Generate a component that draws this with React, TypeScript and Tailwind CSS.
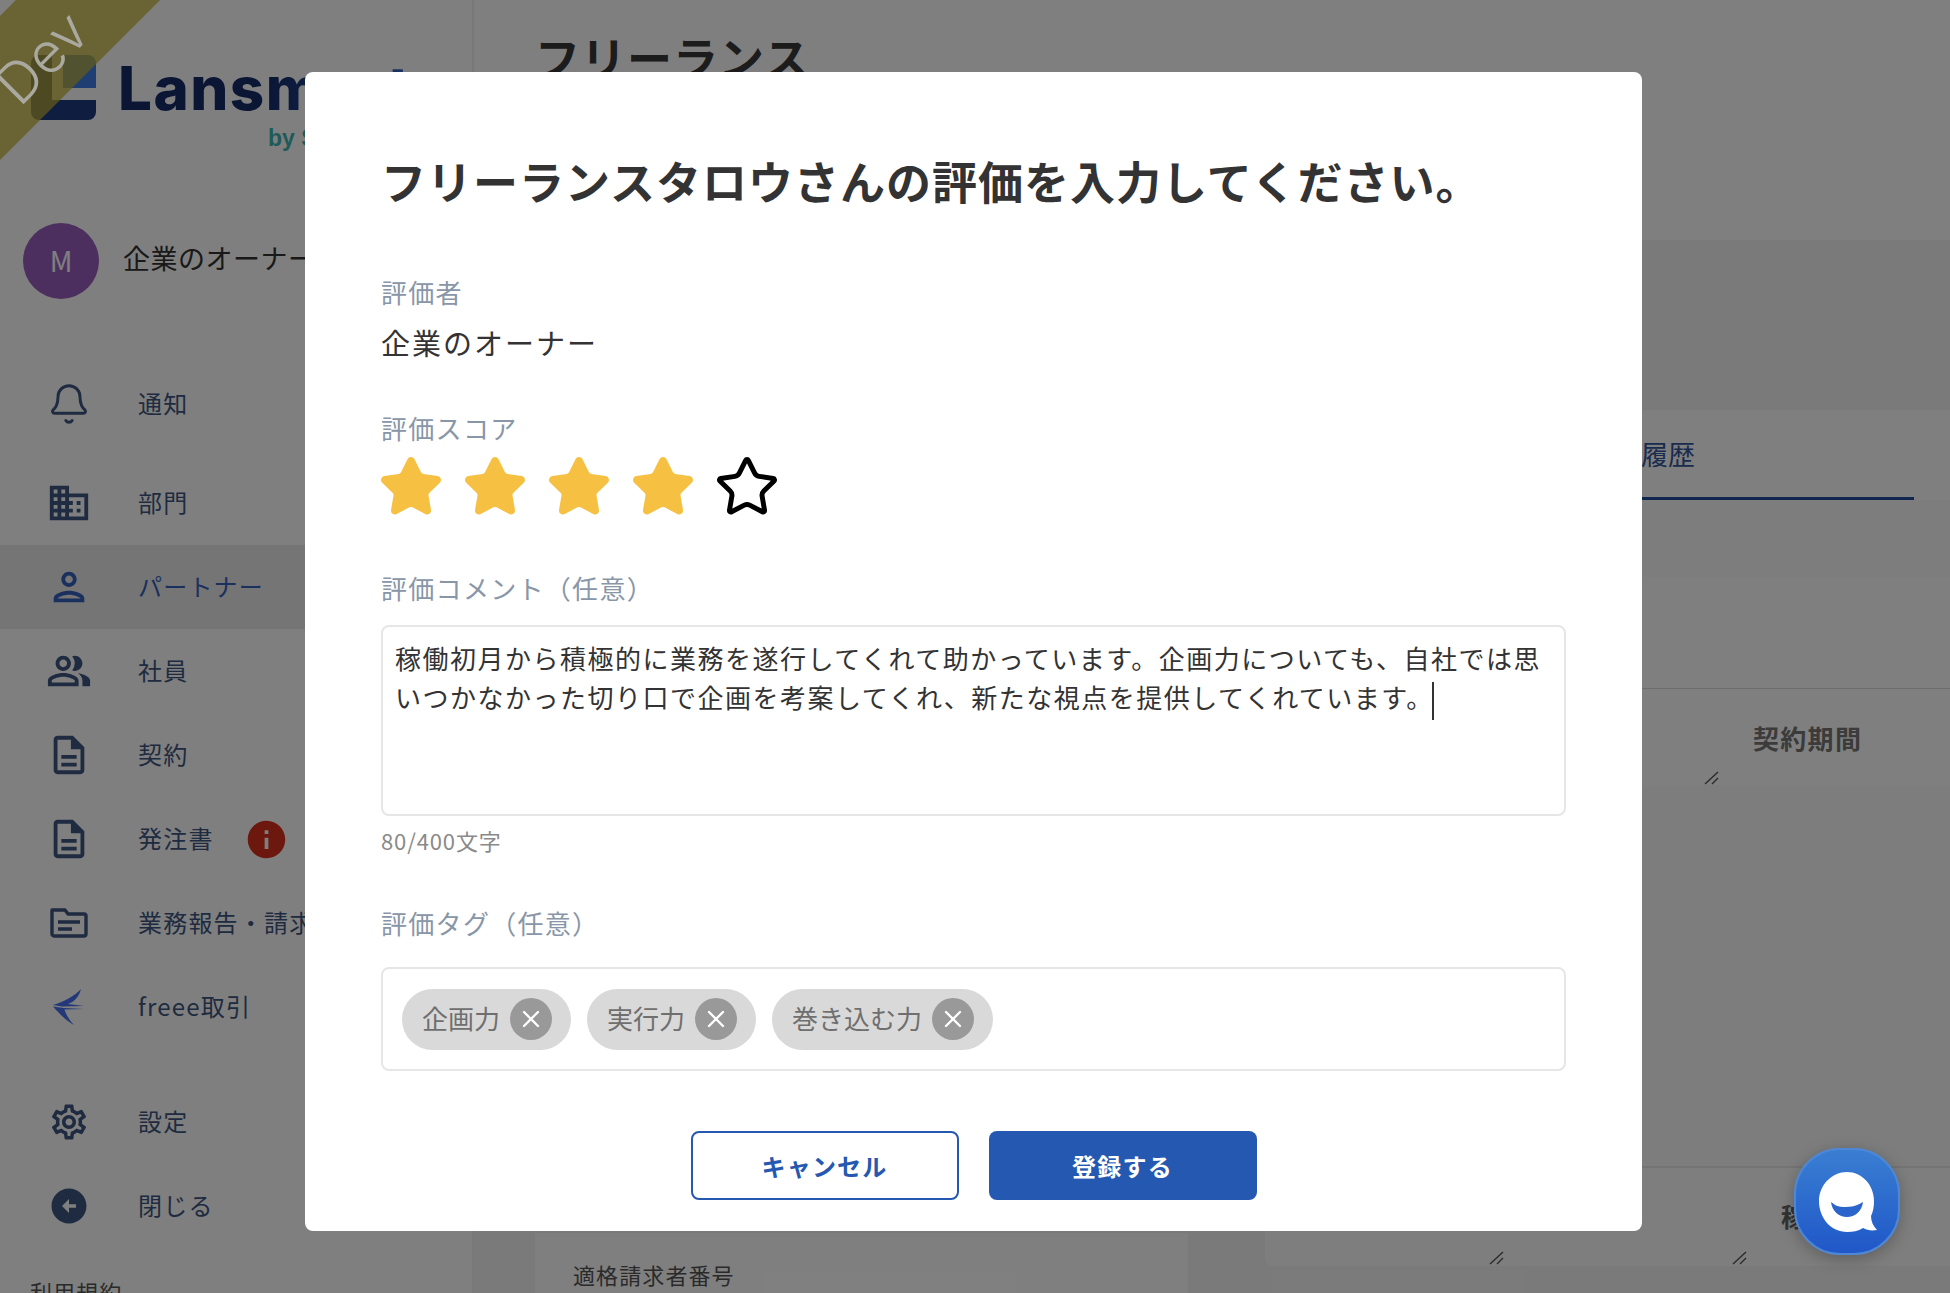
import type { ReactNode } from "react";
import { Bell, Star, X } from "lucide-react";
import {
  MdArrowCircleLeft,
  MdDomain,
  MdInfo,
  MdOutlineDescription,
  MdOutlinePeopleAlt,
  MdOutlinePerson,
  MdOutlineSettings,
} from "react-icons/md";

function LogoMark() {
  return (
    <svg width="65" height="65" viewBox="0 0 65 65" className="absolute left-[31px] top-[55px]">
      <path d="M8 0h13v45h44v12a8 8 0 0 1-8 8H8a8 8 0 0 1-8-8V8a8 8 0 0 1 8-8z" fill="#1c3a80" />
      <path d="M32 0h25a8 8 0 0 1 8 8v25H32z" fill="#3f7fe8" />
    </svg>
  );
}

function FolderIcon() {
  return (
    <svg width="40" height="32" viewBox="0 0 40 32" fill="none" stroke="currentColor" strokeWidth="3.4">
      <path d="M3 3h13l3 4h16a2 2 0 0 1 2 2v18a2 2 0 0 1-2 2H5a2 2 0 0 1-2-2z" strokeLinejoin="round" />
      <path d="M9 15h22M9 22h14" />
    </svg>
  );
}

function FreeeIcon() {
  return (
    <svg width="34" height="38" viewBox="0 0 34 38" fill="#4670f0">
      <path d="M1 17C11 14 23 8 29 1 27 9 22 14 16 16l16 2-22 .5z" />
      <path d="M1 18.5 12 20c2 7 6 13 10 17C13 32 7 25 1 18.5z" />
      <path d="m12 20 20 1-20 .5z" />
    </svg>
  );
}

function ChatIcon() {
  return (
    <svg width="58" height="60" viewBox="0 0 58 60">
      <path
        d="M28 0c15 0 27 13 27 29 0 6-1 11-3 15 0 5 2 10 6 14-6 1-10 0-14-2-5 3-10 4-16 4C12 60 0 46 0 29 0 13 13 0 28 0z"
        fill="#fff"
      />
      <path d="M12 30c4 3 6 5 15 5s13-3 17-5c-1 9-8 15-16 15S13 39 12 30z" fill="#2b65cc" />
    </svg>
  );
}

function ResizeHandle() {
  return (
    <svg width="16" height="14" viewBox="0 0 16 14" stroke="#555" strokeWidth="1.4" className="mb-[1px] mr-[2px] shrink-0">
      <path d="M1 13 14 1M8 13l6-6" />
    </svg>
  );
}

function NavItem({
  icon,
  label,
  active,
  badge,
  className,
}: {
  icon: ReactNode;
  label: string;
  active?: boolean;
  badge?: boolean;
  className?: string;
}) {
  return (
    <div
      className={`flex h-[84px] items-center pl-[46px] ${active ? "bg-[#eaeaea] text-[#3560bd]" : "text-[#3f5680]"} ${className ?? ""}`}
    >
      <span className="flex w-[46px] shrink-0 items-center justify-center">{icon}</span>
      <span className="ml-[46px] whitespace-nowrap pb-[2px] text-[24px] tracking-[0.05em]">{label}</span>
      {badge && <MdInfo size={45} className="ml-[30px] shrink-0 text-[#d8301c]" />}
    </div>
  );
}

function Sidebar() {
  return (
    <aside className="flex w-[474px] shrink-0 flex-col overflow-hidden border-r-2 border-[#f0f0f0] bg-white">
      <div className="relative h-[222px] shrink-0">
        <LogoMark />
        <div className="absolute left-[118px] top-[48px] bg-gradient-to-r from-[#142c68] via-[#142c68] to-[#3468cc] bg-clip-text font-['Inter',sans-serif] text-[60px] font-extrabold leading-[80px] tracking-[0.025em] text-transparent">
          Lansmart
        </div>
        <div className="absolute left-[268px] top-[123px] font-['Liberation_Sans',sans-serif] text-[23px] font-bold leading-[30px] text-[#3fb5b0]">
          by S
        </div>
      </div>
      <div className="flex h-[78px] shrink-0 items-center pl-[23px]">
        <div className="flex h-[76px] w-[76px] items-center justify-center rounded-full bg-[#9b5fbe] pb-[2px] text-[28px] text-white">
          M
        </div>
        <span className="ml-[24px] whitespace-nowrap pb-[6px] text-[27px] tracking-[0.5px] text-[#333]">企業のオーナー様</span>
      </div>
      <nav className="mt-[62px] flex flex-col">
        <NavItem className="mb-[15px]" icon={<Bell size={44} strokeWidth={1.6} />} label="通知" />
        <NavItem icon={<MdDomain size={46} />} label="部門" />
        <NavItem active icon={<MdOutlinePerson size={46} />} label="パートナー" />
        <NavItem icon={<MdOutlinePeopleAlt size={46} />} label="社員" />
        <NavItem icon={<MdOutlineDescription size={46} />} label="契約" />
        <NavItem badge icon={<MdOutlineDescription size={46} />} label="発注書" />
        <NavItem icon={<FolderIcon />} label="業務報告・請求" />
        <NavItem icon={<FreeeIcon />} label="freee取引" />
        <NavItem className="mt-[31px]" icon={<MdOutlineSettings size={42} />} label="設定" />
        <NavItem icon={<MdArrowCircleLeft size={42} />} label="閉じる" />
      </nav>
      <div className="ml-[30px] mt-[29px] text-[22px] leading-[28px] tracking-[0.05em] text-[#555]">利用規約</div>
    </aside>
  );
}

function MainContent() {
  return (
    <main className="flex min-w-0 flex-1 flex-col bg-[#f5f5f5]">
      <header className="h-[240px] shrink-0 bg-white pl-[61px] pt-[26px]">
        <h1 className="text-[45px] font-bold leading-[62px] tracking-[1px] text-[#383838]">フリーランス</h1>
      </header>
      <div className="flex min-h-0 flex-1">
        <div className="ml-[61px] flex w-[653px] shrink-0 flex-col justify-end">
          <div className="h-[60px] bg-white pl-[38px] pt-[24px] text-[22px] leading-[34px] tracking-[0.05em] text-[#555]">適格請求者番号</div>
        </div>
        <div className="ml-[77px] flex min-w-0 flex-1 flex-col">
          <div className="mt-[170px] flex h-[90px] justify-end bg-white pr-[36px]">
            <div className="flex w-[400px] items-center justify-end border-b-[3px] border-[#254f9f] pr-[219px] pt-[2px] text-[27px] text-[#33569c]">
              履歴
            </div>
          </div>
          <div className="h-[77px] bg-[#fbfbfb]" />
          <div className="h-[111px] bg-white" />
          <div className="flex h-[98px] border-t border-[#d8d8d8] bg-white">
            <div className="flex w-[457px] items-end justify-end">
              <ResizeHandle />
            </div>
            <div className="ml-[31px] flex items-center text-[26px] font-bold tracking-[0.05em] text-[#777]">契約期間</div>
          </div>
          <div className="h-[380px] bg-[#fafafa]" />
          <div className="flex h-[100px] rounded-bl-[8px] border-t-2 border-[#e8e8e8] bg-[#fdfdfd] text-[26px] font-bold text-[#666]">
            <div className="flex w-[242px] items-end justify-end">
              <ResizeHandle />
            </div>
            <div className="flex w-[243px] items-end justify-end">
              <ResizeHandle />
            </div>
            <div className="ml-[31px] pt-[28px]">稼働</div>
          </div>
        </div>
      </div>
    </main>
  );
}

function Field({ label, children, className }: { label: string; children: ReactNode; className?: string }) {
  return (
    <div className={className}>
      <div className="text-[26px] leading-[36px] tracking-[0.05em] text-[#8896a8]">{label}</div>
      {children}
    </div>
  );
}

function TagChip({ label }: { label: string }) {
  return (
    <div className="flex h-[61px] items-center rounded-full bg-[#d9d9d9] pl-[20px] pr-[19px]">
      <span className="pb-[4px] text-[26px] text-[#6f6f6f]">{label}</span>
      <span className="ml-[10px] flex h-[42px] w-[42px] items-center justify-center rounded-full bg-[#999]">
        <X size={28} strokeWidth={2} className="text-white" />
      </span>
    </div>
  );
}

function EvaluationModal() {
  return (
    <div className="ml-[305px] mt-[72px] h-[1159px] w-[1337px] overflow-hidden rounded-[8px] bg-white px-[76px] pt-[77px]">
      <h2 className="whitespace-nowrap text-[45px] font-bold leading-[64px] tracking-[1px] text-[#333]">
        フリーランスタロウさんの評価を入力してください。
      </h2>
      <Field label="評価者" className="mt-[61px]">
        <div className="mt-[10px] text-[29px] leading-[44px] tracking-[2px] text-[#333]">企業のオーナー</div>
      </Field>
      <Field label="評価スコア" className="mt-[46px]">
        <div className="-ml-[3px] mt-[8px] flex gap-[18px]">
          {[0, 1, 2, 3].map((i) => (
            <Star key={i} size={66} strokeWidth={1.8} className="fill-[#f6c143] text-[#f6c143]" />
          ))}
          <Star size={66} strokeWidth={1.8} className="text-black" />
        </div>
      </Field>
      <Field label="評価コメント（任意）" className="mt-[50px]">
        <div className="mt-[19px] h-[191px] rounded-[8px] border-2 border-[#e6e6e6] px-[12px] pb-[13px] pt-[11px] text-[26px] leading-[39px] tracking-[1.5px] text-[#333]">
          稼働初月から積極的に業務を遂行してくれて助かっています。企画力についても、自社では思いつかなかった切り口で企画を考案してくれ、新たな視点を提供してくれています。
          <span className="-ml-[2px] inline-block h-[38px] w-[2px] bg-[#333] align-middle" />
        </div>
      </Field>
      <div className="mt-[9px] text-[22px] leading-[30px] tracking-[0.04em] text-[#8a8a8a]">80/400文字</div>
      <Field label="評価タグ（任意）" className="mt-[50px]">
        <div className="mt-[26px] flex h-[104px] items-center gap-[16px] rounded-[8px] border-2 border-[#e6e6e6] pl-[19px]">
          <TagChip label="企画力" />
          <TagChip label="実行力" />
          <TagChip label="巻き込む力" />
        </div>
      </Field>
      <div className="mt-[60px] flex justify-center gap-[30px]">
        <button className="h-[69px] w-[268px] rounded-[8px] border-2 border-[#2558b0] bg-white text-[24px] font-bold tracking-[0.05em] text-[#2558b0]">
          キャンセル
        </button>
        <button className="h-[69px] w-[268px] rounded-[8px] bg-[#2558b0] text-[24px] font-bold tracking-[0.05em] text-white">
          登録する
        </button>
      </div>
    </div>
  );
}

export default function App() {
  return (
    <div className="relative flex h-[1293px] w-[1950px] overflow-hidden font-['Noto_Sans_CJK_JP','Noto_Sans',sans-serif]">
      <Sidebar />
      <MainContent />

      {/* dim layer and dialog */}
      <div className="absolute inset-0 bg-black/50">
        <EvaluationModal />
      </div>

      {/* Dev ribbon */}
      <div className="absolute -left-[106px] -top-[7px] flex h-[102px] w-[300px] -rotate-45 items-center justify-center bg-[#635a1a]/75 pr-[22px] pt-[16px] font-['Inter',sans-serif] text-[56px] font-light text-[#aaa9a0]">
        Dev
      </div>

      {/* support chat */}
      <button className="absolute left-[1794px] top-[1148px] flex h-[107px] w-[106px] items-center justify-center rounded-[46px] border-2 border-[#4d87d6] bg-gradient-to-b from-[#3a7ed2] to-[#2157c8] pl-[2px] shadow-[0_4px_16px_rgba(0,0,0,0.25)]">
        <ChatIcon />
      </button>
    </div>
  );
}
